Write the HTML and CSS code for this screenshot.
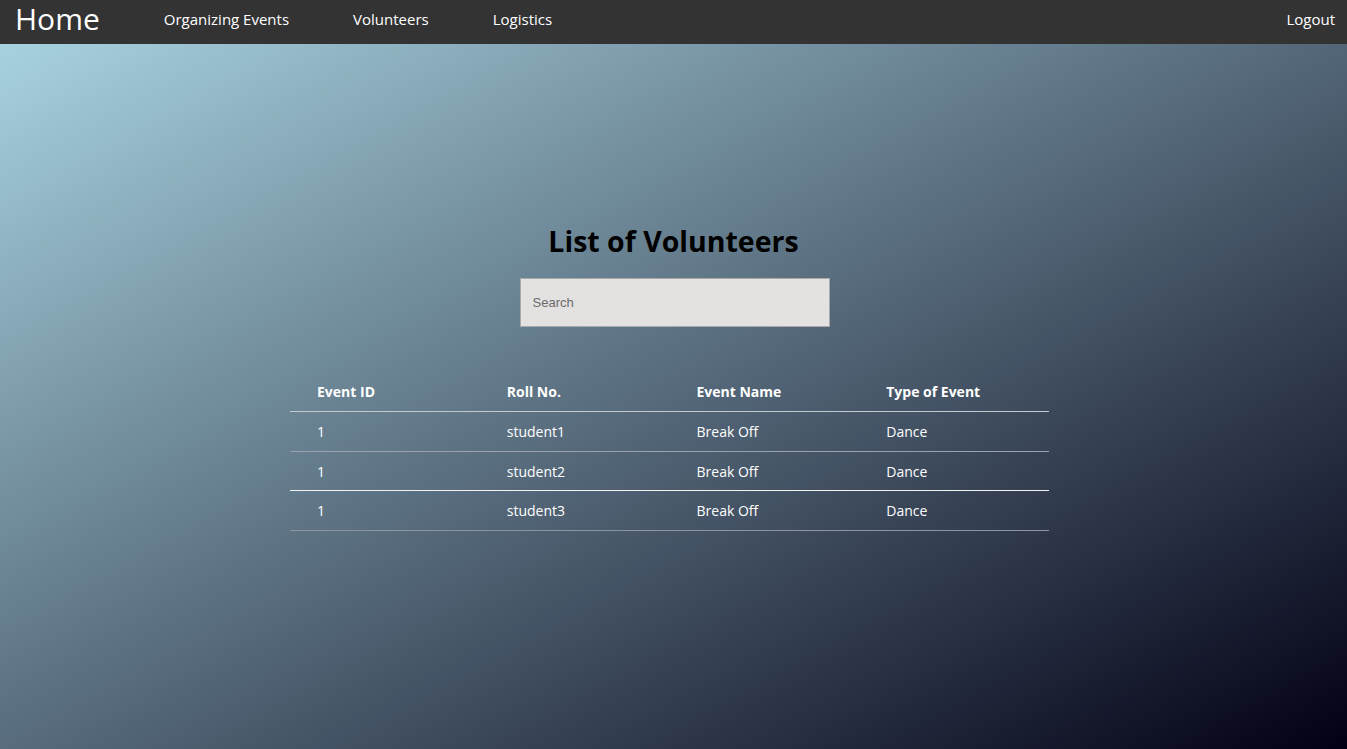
FILE: index.html
```html
<!DOCTYPE html>
<html lang="en">
<head>
<meta charset="utf-8">
<title>List of Volunteers</title>
<link rel="stylesheet" href="styles.css">
</head>
<body>
<nav class="navbar">
  <a class="brand" href="#">Home</a>
  <a class="nav-link" href="#">Organizing Events</a>
  <a class="nav-link" href="#">Volunteers</a>
  <a class="nav-link" href="#">Logistics</a>
  <a class="nav-link logout" href="#">Logout</a>
</nav>
<main class="content">
  <h1 class="title">List of Volunteers</h1>
  <input class="search" type="text" placeholder="Search">
  <table class="vol-table">
    <thead>
      <tr><th>Event ID</th><th>Roll No.</th><th>Event Name</th><th>Type of Event</th></tr>
    </thead>
    <tbody>
      <tr class="r1"><td>1</td><td>student1</td><td>Break Off</td><td>Dance</td></tr>
      <tr class="r2"><td>1</td><td>student2</td><td>Break Off</td><td>Dance</td></tr>
      <tr class="r3"><td>1</td><td>student3</td><td>Break Off</td><td>Dance</td></tr>
    </tbody>
  </table>
</main>
</body>
</html>
```
FILE: styles.css
```css
html, body {
  margin: 0;
  height: 100%;
}
body {
  font-family: "Open Sans", "Noto Sans", sans-serif;
  background: linear-gradient(to bottom right, #add8e6, #020014);
  color: #fff;
}
.navbar {
  display: flex;
  align-items: center;
  height: 44px;
  box-sizing: border-box;
  background: #333333;
  padding: 0 12px 6px 15px;
  gap: 64px;
}
.navbar a {
  color: #fff;
  text-decoration: none;
}
.brand {
  font-size: 30px;
  line-height: 36px;
}
.nav-link {
  font-size: 15px;
}
.logout {
  margin-left: auto;
}
.content {
  display: flex;
  flex-direction: column;
  align-items: center;
  padding-top: 179px;
}
.title {
  margin: 0;
  font-size: 28.5px;
  line-height: 36px;
  font-weight: 700;
  color: #000;
}
.search {
  margin: 19px 0 0 2px;
  width: 310px;
  height: 49px;
  box-sizing: border-box;
  padding: 0 12px;
  background: #e4e1e1;
  border: 1px solid #a9a9a9;
  font-family: "Liberation Sans", Arial, sans-serif;
  font-size: 13px;
  color: #333;
  outline: none;
}
.search::placeholder {
  color: #6b6b6b;
}
.vol-table {
  margin: 45px 8px 0 0;
  width: 759px;
  border-collapse: collapse;
  font-size: 14px;
}
.vol-table th,
.vol-table td {
  text-align: left;
  padding: 12px 27px;
  line-height: 15px;
  width: 25%;
}
.vol-table th {
  font-weight: 700;
}
.vol-table thead tr {
  border-bottom: 1px solid #c2c9d0;
}
.vol-table td {
  padding-top: 12px;
  padding-bottom: 11.5px;
}
.vol-table .r1 { border-bottom: 1px solid #9aa3ad; }
.vol-table .r2 { border-bottom: 1px solid #f2f2f2; }
.vol-table .r3 { border-bottom: 1px solid #8e959f; }
```
